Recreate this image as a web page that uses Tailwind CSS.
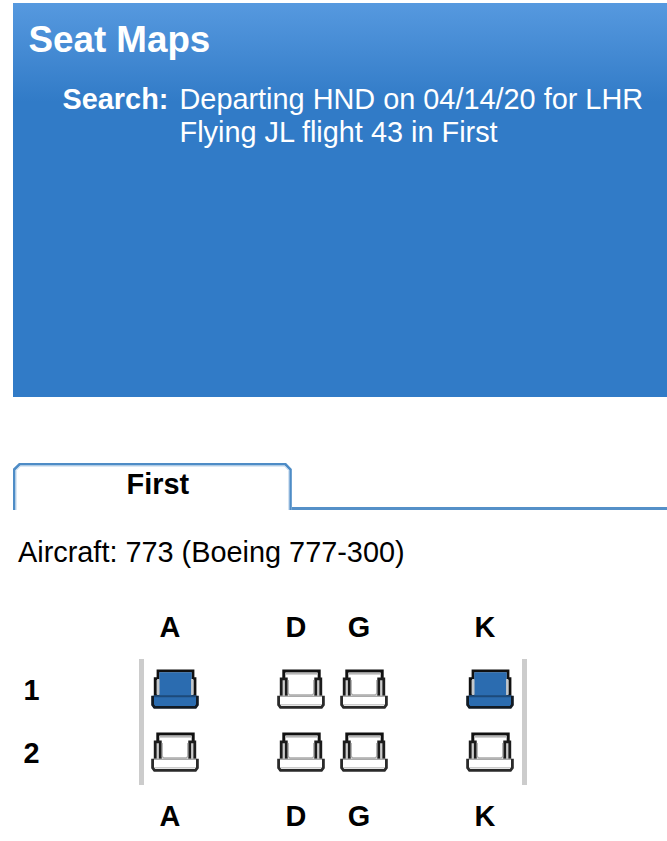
<!DOCTYPE html>
<html lang="en">

<head>
    <meta charset="UTF-8">
    <meta name="viewport" content="width=device-width, initial-scale=1.0">
    <title>Seat Maps</title>
    <script src="https://cdn.jsdelivr.net/npm/@tailwindcss/browser@4"></script>
</head>

<body class="bg-white text-black font-['Liberation_Sans',Arial,sans-serif] text-[28.875px] leading-[33px] overflow-hidden">

    <!-- Seat symbols -->
    <svg class="hidden">
        <symbol id="seat-open" viewBox="0 0 48 40">
            <path d="M6.8 9V1.9H42.2V9" fill="#fff" stroke="#111" stroke-width="3" />
            <path d="M9 4.6H40" stroke="#b5b5b5" stroke-width="2" />
            <path d="M4.2 27V9.8H9.3V27M38.7 27V9.8H43.8V27" fill="#ccc" stroke="#1c1c1c" stroke-width="2.8" />
            <path d="M11.2 11V25M36.8 11V25" stroke="#999" stroke-width="1" />
            <path d="M11 24.5L13 26H35L37 24.5" fill="none" stroke="#aaa" stroke-width="1.4" />
            <path d="M1.6 27.3H46.4V35.8L44.5 38.3H3.5L1.6 35.8Z" fill="#fff" />
            <path d="M3 27.3H45" stroke="#aaa" stroke-width="1.4" />
            <path d="M3 35.8H45" stroke="#ccc" stroke-width="1.4" />
            <path d="M1.6 26.8V35.8L3.5 38.3H44.5L46.4 35.8V26.8" fill="none" stroke="#2a2a2a" stroke-width="2.8" />
        </symbol>
        <symbol id="seat-taken" viewBox="0 0 48 40">
            <path d="M4.2 27V9.6H7V1.9H42V9.6H44V27Z" fill="#ccc" stroke="#111" stroke-width="2.8" />
            <path d="M8.3 3.2H40.7V27H8.3Z" fill="#2b6cb0" />
            <path d="M7.2 10V26M41.2 10V26" stroke="#c4c8cc" stroke-width="2.2" />
            <path d="M1.6 26.8H46.4V35.8L44.5 38.3H3.5L1.6 35.8Z" fill="#2b6cb0" />
            <path d="M3 27.3H45" stroke="#1d4a7a" stroke-width="2" />
            <path d="M1.6 26.8V35.8L3.5 38.3H44.5L46.4 35.8V26.8" fill="none" stroke="#111a24" stroke-width="2.8" />
        </symbol>
    </svg>

    <div class="pl-[13px] pt-[3px]">

        <!-- Header -->
        <div class="h-[394px] bg-[#317bc7] bg-linear-to-b from-[#5699df] via-[#317bc7] via-25% to-[#317bc7] text-white pt-[16px]">
            <h1 class="pl-[15.5px] text-[36.75px] leading-[42px] font-bold">Seat Maps</h1>
            <div class="flex pt-[22px] pl-[49.5px] whitespace-nowrap">
                <div class="w-[117px] font-bold">Search:</div>
                <div>Departing HND on 04/14/20 for LHR<br>Flying JL flight 43 in First</div>
            </div>
        </div>

        <!-- Cabin tab -->
        <div class="mt-[66px] flex h-[47px]">
            <div class="grid w-[279px] h-[47px]">
                <svg class="col-start-1 row-start-1" width="279" height="47" fill="none">
                    <path d="M1.2 47V6.5L6.5 1.3H272.5L277.5 6.5V47" stroke="#4e8cc6" stroke-width="2.6" />
                    <path d="M3 47V7.5L7.5 3H271.5L275.9 7.5V47" stroke="#b9d2ea" stroke-width="1" />
                </svg>
                <div class="col-start-1 row-start-1 pt-[5px] pl-[113.5px] font-bold">First</div>
            </div>
            <div class="grow border-b-3 border-[#5590c8]"></div>
        </div>

        <div class="pl-[5px] mt-[26px]">Aircraft: 773 (Boeing 777-300)</div>

        <!-- Seat map -->
        <div class="mt-[42px] font-bold">
            <div class="ml-[125.5px] grid grid-cols-[repeat(6,63px)] text-center">
                <span>A</span><span class="col-start-3">D</span><span>G</span><span class="col-start-6">K</span>
            </div>
            <div class="flex mt-[15px]">
                <div class="w-[126px] pl-[10.5px] leading-[63px]">
                    <div>1</div>
                    <div>2</div>
                </div>
                <div class="w-[388px] h-[126px] border-x-5 border-[#ccc] grid grid-cols-[repeat(6,63px)] grid-rows-[63px_63px] pl-[7.3px] pt-[9.5px]">
                    <svg class="w-[48px] h-[40px]"><use href="#seat-taken" /></svg>
                    <svg class="w-[48px] h-[40px] col-start-3"><use href="#seat-open" /></svg>
                    <svg class="w-[48px] h-[40px]"><use href="#seat-open" /></svg>
                    <svg class="w-[48px] h-[40px] col-start-6"><use href="#seat-taken" /></svg>
                    <svg class="w-[48px] h-[40px] col-start-1"><use href="#seat-open" /></svg>
                    <svg class="w-[48px] h-[40px] col-start-3"><use href="#seat-open" /></svg>
                    <svg class="w-[48px] h-[40px]"><use href="#seat-open" /></svg>
                    <svg class="w-[48px] h-[40px] col-start-6"><use href="#seat-open" /></svg>
                </div>
            </div>
            <div class="mt-[15px] ml-[125.5px] grid grid-cols-[repeat(6,63px)] text-center">
                <span>A</span><span class="col-start-3">D</span><span>G</span><span class="col-start-6">K</span>
            </div>
        </div>
    </div>

</body>

</html>
